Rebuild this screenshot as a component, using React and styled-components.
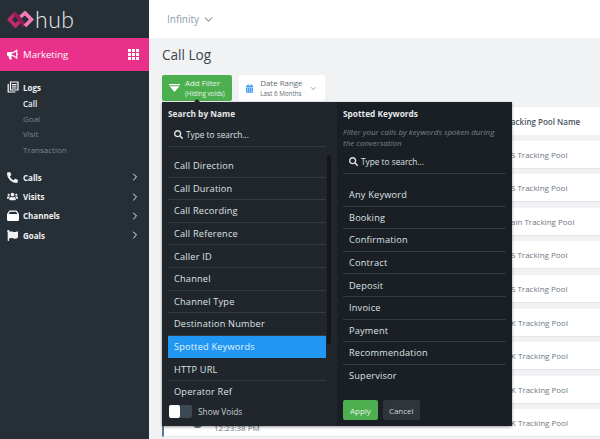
import React from 'react';
import styled, { createGlobalStyle } from 'styled-components';
import { ChevronRight, ChevronDown } from 'lucide-react';
import { FaBullhorn, FaPhoneAlt, FaUsers, FaFlag, FaSearch, FaCalendarAlt } from 'react-icons/fa';

const GlobalStyle = createGlobalStyle`
  html, body { margin: 0; padding: 0; height: 100%; overflow: hidden; }
  body { font-family: "Open Sans", Arial, sans-serif; background: #f1f2f4; }
`;

const Page = styled.div`
  display: flex;
  width: 600px;
  height: 439px;
  overflow: hidden;
`;

const Sidebar = styled.aside`
  width: 149px;
  flex: none;
  background: #272f36;
  color: #fff;
`;

const LogoBar = styled.div`
  height: 38px;
  display: flex;
  align-items: center;
  padding-left: 7px;
  gap: 1px;
`;

const LogoText = styled.span`
  font-family: Lato, sans-serif;
  font-weight: 300;
  font-size: 23px;
  letter-spacing: 0.5px;
  color: #e8eaec;
  line-height: 1;
`;

const SectionBar = styled.div`
  height: 33px;
  background: #e9308a;
  display: flex;
  align-items: center;
  padding: 0 10px 0 7px;
  font-size: 9.6px;
  font-weight: 400;
  gap: 5px;
`;

const SectionName = styled.span`
  flex: 1;
`;

const GridIcon = styled.div`
  display: grid;
  grid-template-columns: repeat(3, 3px);
  grid-auto-rows: 3px;
  gap: 1px;
  & > i { background: #fff; }
`;

const Nav = styled.nav`
  padding-top: 7px;
`;

const NavHead = styled.div`
  display: flex;
  align-items: center;
  height: ${p => p.$h || 19.3}px;
  padding: 0 8px 0 7px;
  font-size: 8px;
  font-weight: 700;
  color: #eef0f2;
`;

const NavIcon = styled.span`
  width: 16px;
  display: flex;
  font-size: 11px;
`;

const NavLabel = styled.span`
  flex: 1;
`;

const SubItem = styled.div`
  height: 15.2px;
  line-height: 15.2px;
  padding-left: 23px;
  font-size: 8px;
  font-weight: ${p => (p.$active ? 600 : 400)};
  color: ${p => (p.$active ? '#eef0f2' : '#7b858c')};
`;

const SubList = styled.div`
  margin: 0 0 11px;
`;

const Main = styled.main`
  flex: 1;
  min-width: 0;
  position: relative;
`;

const TopBar = styled.div`
  height: 38px;
  background: #fff;
  display: flex;
  align-items: center;
  padding-left: 18px;
  gap: 3px;
  font-size: 10px;
  color: #8d9ba8;
`;

const Content = styled.div`
  padding: 7px 0 0 13px;
`;

const Title = styled.h1`
  margin: 0;
  font-size: 13.6px;
  font-weight: 400;
  line-height: 20px;
  color: #3a444c;
`;

const Toolbar = styled.div`
  display: flex;
  gap: 7px;
  margin-top: 10px;
`;

const AddFilter = styled.div`
  width: 70px;
  height: 26px;
  box-sizing: border-box;
  background: #4caf50;
  border-radius: 2px;
  color: #e8f5e9;
  display: flex;
  align-items: center;
  padding-left: 7px;
  gap: 5px;
`;

const ButtonText = styled.div`
  display: flex;
  flex-direction: column;
  line-height: 9px;
  font-size: 7.9px;
  white-space: nowrap;
`;

const Small = styled.span`
  font-size: 6.3px;
  margin-top: 1px;
`;

const DateRange = styled.div`
  width: 86px;
  height: 26px;
  box-sizing: border-box;
  background: #fff;
  border-radius: 2px;
  color: #5f6c76;
  display: flex;
  align-items: center;
  padding-left: 7px;
  gap: 7px;
`;

const DateText = styled(ButtonText)`
  flex: 1;
`;

const DateChevron = styled(ChevronDown)`
  margin-right: 7px;
  color: #6f7c86;
`;

const Table = styled.div`
  margin-top: 6px;
`;

const HeadRow = styled.div`
  height: 28px;
  background: #fff;
  display: flex;
  align-items: center;
  padding-left: 341px;
  font-size: 8px;
  font-weight: 600;
  color: #4b555d;
  white-space: nowrap;
`;

const Row = styled.div`
  height: 28px;
  margin-top: 5.6px;
  background: #fff;
  border-bottom: 1px solid #e4e6e9;
  box-sizing: border-box;
  display: flex;
  align-items: center;
  padding-left: 349px;
  font-size: 8px;
  color: #6e777f;
  white-space: nowrap;
`;

const TimeRow = styled(Row)`
  padding-left: 28px;
  border-left: 2px solid #5b7a90;
`;

const Avatar = styled.span`
  width: 11px;
  height: 11px;
  flex: none;
  border-radius: 50%;
  background: #5b7a90;
  margin: 0 11px 0 0;
`;

const TimeCell = styled.span`
  width: 297px;
  flex: none;
  align-self: flex-end;
  line-height: 9px;
  padding-bottom: 4px;
`;

const Popover = styled.div`
  position: absolute;
  left: 13px;
  top: 102px;
  width: 350px;
  height: 324px;
  display: flex;
  border-radius: 2px;
  box-shadow: 0 1px 3px rgba(0, 0, 0, 0.4);
  color: #e6e8ea;
  &::before {
    content: '';
    position: absolute;
    left: 32px;
    top: -3px;
    border-left: 3px solid transparent;
    border-right: 3px solid transparent;
    border-bottom: 3px solid #20262c;
  }
`;

const LeftCol = styled.div`
  width: 175px;
  background: #20262c;
  padding: 5px 11px 0 6px;
  box-sizing: border-box;
  position: relative;
`;

const RightCol = styled.div`
  width: 175px;
  background: #191f24;
  padding: 5px 6px 0;
  box-sizing: border-box;
  display: flex;
  flex-direction: column;
`;

const ColTitle = styled.div`
  font-size: 8.3px;
  font-weight: 700;
  line-height: 13px;
`;

const Hint = styled.div`
  font-size: 8px;
  font-style: italic;
  line-height: 11px;
  color: #79838b;
  margin-top: 6px;
`;

const SearchBox = styled.div`
  display: flex;
  align-items: center;
  gap: 3px;
  height: 24px;
  padding-left: 6px;
  font-size: 8.3px;
  color: #dfe2e5;
  border-bottom: 1px solid #333b42;
  margin-top: ${p => p.$mt || 0}px;
  margin-bottom: ${p => p.$mb || 0}px;
`;

const Option = styled.div`
  height: 22.6px;
  box-sizing: border-box;
  display: flex;
  align-items: center;
  padding-left: 6px;
  font-size: 9.2px;
  letter-spacing: 0.2px;
  color: ${p => (p.$active ? '#e3f2fd' : '#dfe2e5')};
  background: ${p => (p.$active ? '#2196f3' : 'transparent')};
  border-bottom: 1px solid ${p => (p.$last || p.$active ? 'transparent' : '#333b42')};
`;

const Scrollbar = styled.div`
  position: absolute;
  right: 6px;
  top: 53px;
  width: 4px;
  height: 189px;
  border-radius: 2px;
  background: #13171b;
`;

const VoidRow = styled.div`
  position: absolute;
  left: 7px;
  top: 303px;
  display: flex;
  align-items: center;
  gap: 6px;
  font-size: 8.3px;
  color: #c9cdd1;
`;

const Toggle = styled.div`
  width: 23px;
  height: 13px;
  border-radius: 2px;
  background: #3b4954;
  position: relative;
  &::before {
    content: '';
    position: absolute;
    left: 0;
    top: 0;
    width: 11px;
    height: 13px;
    border-radius: 2px;
    background: #fff;
  }
`;

const Actions = styled.div`
  display: flex;
  gap: 5px;
  margin-top: auto;
  margin-bottom: 6px;
`;

const Btn = styled.div`
  height: 20px;
  padding: 0 ${p => p.$pad}px;
  display: flex;
  align-items: center;
  border-radius: 2px;
  font-size: 8px;
  background: ${p => (p.$primary ? '#4caf50' : '#2e353b')};
  color: ${p => (p.$primary ? '#e8f5e9' : '#cfd3d6')};
`;

function Logo() {
  return (
    <svg width="27" height="17" viewBox="0 0 27 17" fill="none" strokeWidth="3.6" strokeLinejoin="miter">
      <path d="M8.5 2 L2.5 8.5 L8.5 15 L12.5 10.5" stroke="#c2286f" />
      <path d="M7 1.5 L18 15" stroke="#8e1e58" />
      <path d="M13.5 6 L18 1.9 L24.5 8.5 L18 15" stroke="#f47ab5" />
    </svg>
  );
}

// stacked pages icon next to Logs
function LogsIcon() {
  return (
    <svg width="12" height="12" viewBox="0 0 12 12" fill="none" stroke="#fff">
      <path d="M3.5 1H11V9H3.5Z" strokeWidth="1.2" />
      <path d="M5 3.5H9.5M5 5.2H9.5M5 7H9.5" strokeWidth="1" />
      <path d="M1.2 3V11H8.5" strokeWidth="1.2" />
    </svg>
  );
}

// filled tray icon next to Channels
function TrayIcon() {
  return (
    <svg width="12" height="11" viewBox="0 0 12 11" fill="#fff">
      <path d="M2.5 0.5H9.5L12 4V9.5Q12 11 10.5 11H1.5Q0 11 0 9.5V4ZM3 1.7L1.5 4H10.5L9 1.7Z" fillRule="evenodd" />
    </svg>
  );
}

function FunnelIcon() {
  return (
    <svg width="11" height="8" viewBox="0 0 11 8" fill="#fff">
      <path d="M0 0H11V1.2H0ZM0.6 2.2H10.4L5.5 8Z" />
    </svg>
  );
}

const channels = ['S Tracking Pool', 'S Tracking Pool', 'ain Tracking Pool', 'S Tracking Pool', 'S Tracking Pool', 'K Tracking Pool', 'K Tracking Pool', 'K Tracking Pool'];
const names = ['Call Direction', 'Call Duration', 'Call Recording', 'Call Reference', 'Caller ID', 'Channel', 'Channel Type', 'Destination Number', 'Spotted Keywords', 'HTTP URL', 'Operator Ref'];
const keywords = ['Any Keyword', 'Booking', 'Confirmation', 'Contract', 'Deposit', 'Invoice', 'Payment', 'Recommendation', 'Supervisor'];
const groups = [
  ['Calls', <FaPhoneAlt key="c" />],
  ['Visits', <FaUsers key="v" />],
  ['Channels', <TrayIcon key="h" />],
  ['Goals', <FaFlag key="g" />],
];

export default function App() {
  return (
    <Page>
      <GlobalStyle />
      <Sidebar>
        <LogoBar>
          <Logo />
          <LogoText>hub</LogoText>
        </LogoBar>
        <SectionBar>
          <FaBullhorn size={11} />
          <SectionName>Marketing</SectionName>
          <GridIcon>
            {Array.from({ length: 9 }, (_, i) => <i key={i} />)}
          </GridIcon>
        </SectionBar>
        <Nav>
          <NavHead $h={18}>
            <NavIcon><LogsIcon /></NavIcon>
            <NavLabel>Logs</NavLabel>
          </NavHead>
          <SubList>
            <SubItem $active>Call</SubItem>
            <SubItem>Goal</SubItem>
            <SubItem>Visit</SubItem>
            <SubItem>Transaction</SubItem>
          </SubList>
          {groups.map(([label, icon]) => (
            <NavHead key={label}>
              <NavIcon>{icon}</NavIcon>
              <NavLabel>{label}</NavLabel>
              <ChevronRight size={12} />
            </NavHead>
          ))}
        </Nav>
      </Sidebar>
      <Main>
        <TopBar>
          Infinity <ChevronDown size={13} />
        </TopBar>
        <Content>
          <Title>Call Log</Title>
          <Toolbar>
            <AddFilter>
              <FunnelIcon />
              <ButtonText>
                Add Filter
                <Small>(Hiding voids)</Small>
              </ButtonText>
            </AddFilter>
            <DateRange>
              <FaCalendarAlt size={11} color="#3f9bf0" />
              <DateText>
                Date Range
                <Small>Last 6 Months</Small>
              </DateText>
              <DateChevron size={13} />
            </DateRange>
          </Toolbar>
          <Table>
            <HeadRow>Tracking Pool Name</HeadRow>
            {channels.map((c, i) => <Row key={i}>{c}</Row>)}
            <TimeRow>
              <Avatar />
              <TimeCell>12:23:38 PM</TimeCell>
              K Tracking Pool
            </TimeRow>
          </Table>
        </Content>
        <Popover>
          <LeftCol>
            <ColTitle>Search by Name</ColTitle>
            <SearchBox $mt={2} $mb={8}>
              <FaSearch size={9} /> Type to search...
            </SearchBox>
            <div>
              {names.map((n, i) => (
                <Option key={n} $active={n === 'Spotted Keywords'} $last={i === names.length - 1}>{n}</Option>
              ))}
            </div>
            <Scrollbar />
            <VoidRow>
              <Toggle />
              Show Voids
            </VoidRow>
          </LeftCol>
          <RightCol>
            <ColTitle>Spotted Keywords</ColTitle>
            <Hint>
              Filter your calls by keywords spoken during the conversation
            </Hint>
            <SearchBox $mt={1} $mb={10}>
              <FaSearch size={9} /> Type to search...
            </SearchBox>
            <div>
              {keywords.map((k, i) => (
                <Option key={k} $last={i === keywords.length - 1}>{k}</Option>
              ))}
            </div>
            <Actions>
              <Btn $primary $pad={7}>Apply</Btn>
              <Btn $pad={6}>Cancel</Btn>
            </Actions>
          </RightCol>
        </Popover>
      </Main>
    </Page>
  );
}
